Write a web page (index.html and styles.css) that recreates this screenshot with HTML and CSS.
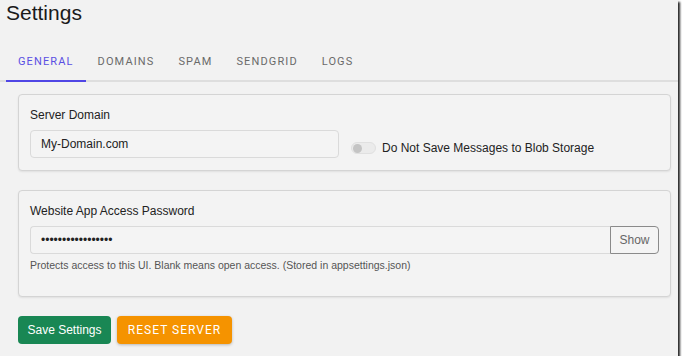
FILE: index.html
```html
<!DOCTYPE html>
<html>
<head>
<meta charset="utf-8">
<link rel="stylesheet" href="styles.css">
</head>
<body>
<div class="frame">
  <h1 class="title">Settings</h1>
  <nav class="tabs">
    <div class="tab active">GENERAL</div>
    <div class="tab">DOMAINS</div>
    <div class="tab">SPAM</div>
    <div class="tab">SENDGRID</div>
    <div class="tab">LOGS</div>
  </nav>
  <main class="content">
    <section class="card">
      <div class="label">Server Domain</div>
      <div class="row">
        <div class="input domain">My-Domain.com</div>
        <div class="toggle-group">
          <span class="switch"><span class="knob"></span></span>
          <span class="toggle-text">Do Not Save Messages to Blob Storage</span>
        </div>
      </div>
    </section>
    <section class="card">
      <div class="label">Website App Access Password</div>
      <div class="input-group">
        <div class="input pw">&#8226;&#8226;&#8226;&#8226;&#8226;&#8226;&#8226;&#8226;&#8226;&#8226;&#8226;&#8226;&#8226;&#8226;&#8226;&#8226;&#8226;</div>
        <button class="show">Show</button>
      </div>
      <div class="help">Protects access to this UI. Blank means open access. (Stored in appsettings.json)</div>
    </section>
    <div class="actions">
      <button class="btn save">Save Settings</button>
      <button class="btn reset">RESET SERVER</button>
    </div>
  </main>
</div>
</body>
</html>
```
FILE: styles.css
```css
html, body {
  margin: 0;
  padding: 0;
  background: #ffffff;
}
.frame {
  width: 678px;
  height: 356px;
  background: #f2f2f2;
  box-shadow: 2px 2px 2px rgba(0, 0, 0, 0.85);
  overflow: hidden;
  font-family: "Liberation Sans", Arial, sans-serif;
  color: #212121;
}
.title {
  margin: 0;
  padding: 1px 6px 0;
  font-size: 21px;
  line-height: 24px;
  font-weight: 400;
  color: #1a1a1a;
}
.tabs {
  display: flex;
  margin-top: 15px;
  height: 42px;
  padding-left: 6px;
  box-shadow: inset 0 -2px 0 #dedede;
}
.tab {
  display: flex;
  align-items: center;
  padding: 2px 12px 0;
  font-family: Roboto, sans-serif;
  font-size: 11px;
  font-weight: 400;
  letter-spacing: 1.12px;
  color: #6a6a6a;
  border-bottom: 2px solid transparent;
}
.tab.active {
  color: #5a4fe3;
  border-bottom-color: #5046e5;
}
.content {
  margin: 12px 7px 0 18px;
  display: flex;
  flex-direction: column;
}
.card {
  border: 1px solid #d4d4d4;
  border-radius: 4px;
  background: #f3f3f3;
  box-shadow: 0 1px 2px rgba(0, 0, 0, 0.08);
  padding: 12px 11px;
  margin-bottom: 19px;
}
.label {
  font-size: 12px;
  line-height: 16px;
  margin-bottom: 7px;
  color: #222;
}
.row {
  display: flex;
  align-items: center;
}
.input {
  box-sizing: border-box;
  height: 28px;
  border: 1px solid #dadada;
  border-radius: 4px;
  background: #f4f4f4;
  padding: 0 10px;
  display: flex;
  align-items: center;
  font-size: 12px;
  color: #222;
}
.domain {
  width: 309px;
}
.toggle-group {
  display: flex;
  align-items: center;
  margin-left: 12px;
  padding-top: 8px;
  font-size: 12px;
}
.switch {
  box-sizing: border-box;
  width: 25px;
  height: 12px;
  border-radius: 6px;
  background: #ebebeb;
  border: 1px solid #e0e0e0;
  display: flex;
  align-items: center;
  padding-left: 1px;
}
.knob {
  width: 9px;
  height: 9px;
  border-radius: 50%;
  background: #c4c4c4;
}
.toggle-text {
  margin-left: 6px;
  color: #222;
}
.input-group {
  display: flex;
}
.pw {
  flex: 1;
  border-radius: 4px 0 0 4px;
  border-right: none;
  font-size: 12px;
}
.show {
  box-sizing: border-box;
  width: 49px;
  height: 28px;
  border: 1px solid #8a8a8a;
  border-radius: 0 4px 4px 0;
  background: #f4f4f4;
  font-family: "Liberation Sans", Arial, sans-serif;
  font-size: 12px;
  color: #666;
  padding: 0;
}
.help {
  margin-top: 4px;
  margin-bottom: 12px;
  font-size: 10.5px;
  line-height: 14px;
  color: #555;
}
.actions {
  display: flex;
  gap: 6px;
}
.btn {
  height: 28px;
  border: none;
  border-radius: 4px;
  color: #fff;
  padding: 0;
}
.save {
  width: 93px;
  background: #198754;
  font-family: "Liberation Sans", Arial, sans-serif;
  font-size: 12px;
}
.reset {
  width: 115px;
  background: #f59300;
  font-family: Roboto, sans-serif;
  font-size: 12px;
  font-weight: 400;
  letter-spacing: 1px;
  box-shadow: 0 1px 3px rgba(0, 0, 0, 0.25);
}
```
